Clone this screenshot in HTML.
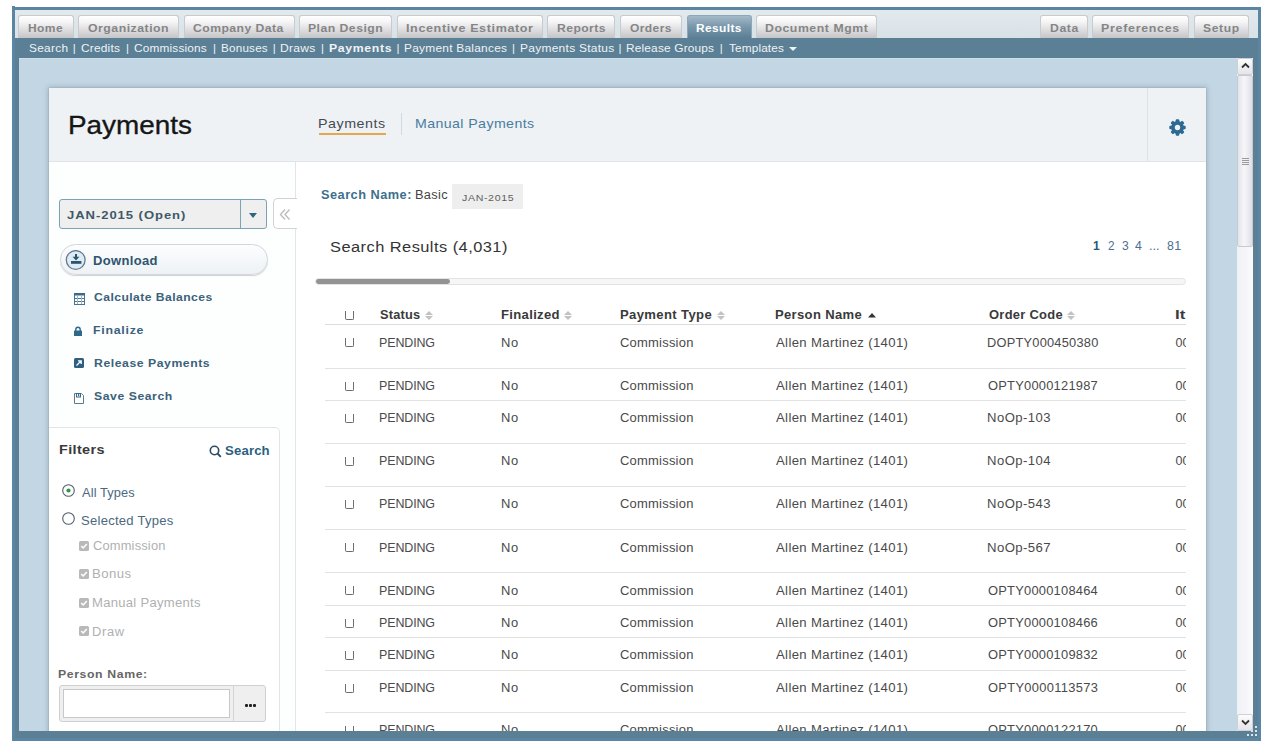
<!DOCTYPE html>
<html><head><meta charset="utf-8">
<style>
*{margin:0;padding:0;box-sizing:border-box}
html,body{width:1272px;height:748px;overflow:hidden;background:#fff;font-family:"Liberation Sans",sans-serif}
.a{position:absolute}
.t{position:absolute;white-space:nowrap;line-height:1;font-family:"Liberation Sans",sans-serif}
#frame{position:absolute;left:12px;top:7px;width:1249px;height:734px;border:3px solid #5a86a4;background:#5b7f95}
#tabbar{position:absolute;left:15px;top:10px;width:1243px;height:28px;background:linear-gradient(#e2eaee,#d8e1e6)}
.tab{position:absolute;top:15px;height:23px;border:1px solid #c8cacc;border-bottom:none;border-radius:3px 3px 0 0;background:linear-gradient(#ffffff 0%,#f6f6f7 25%,#d9d9dc 70%,#c5c5c8 100%)}
.tab.act{border-color:#8ea7b8;background:linear-gradient(#a4bac8 0%,#7b99ad 45%,#5b7f95 100%)}
#subnav{position:absolute;left:15px;top:38px;width:1243px;height:20px;background:#5b7f95}
#clip{position:absolute;left:19px;top:58px;width:1218px;height:673px;background:#c3d6e4;overflow:hidden}
#inner{position:absolute;left:-19px;top:-58px;width:1272px;height:748px}
#vscroll{position:absolute;left:1237px;top:58px;width:16px;height:673px;background:linear-gradient(90deg,#f0f0f6,#fbfbfd)}
#panel{position:absolute;left:49px;top:88px;width:1157px;height:700px;background:#fff;box-shadow:0 0 1px 0 rgba(90,100,110,.45),0 0 5px 1px rgba(90,105,118,.35)}
#phead{position:absolute;left:49px;top:88px;width:1157px;height:74px;background:#eef2f5;border-bottom:1px solid #dfe4e8}
#sidebar{position:absolute;left:49px;top:162px;width:247px;height:600px;background:#fdfefe;border-right:1px solid #e3e6e8}
#tclip{position:absolute;left:315px;top:290px;width:871px;height:460px;overflow:hidden}
#tinner{position:absolute;left:-315px;top:-290px;width:1272px;height:748px}
.rl{position:absolute;left:325px;width:1000px;height:1px;background:#e2e2e2}
.cb{position:absolute;left:345px;width:9px;height:9px;border:1px solid #6e6e6e;border-top:none;border-radius:0 0 2px 2px}
</style></head><body>
<div id="frame"></div>
<div id="tabbar"></div>
<div class="a" style="left:12px;top:6px;width:3px;height:1px;background:#5a86a4"></div>
<div id="subnav"></div>
<div class="tab" style="left:18px;width:56px"></div>
<div class="tab" style="left:78px;width:101px"></div>
<div class="tab" style="left:184px;width:111px"></div>
<div class="tab" style="left:299px;width:93px"></div>
<div class="tab" style="left:397px;width:146px"></div>
<div class="tab" style="left:547px;width:68px"></div>
<div class="tab" style="left:620px;width:62px"></div>
<div class="tab act" style="left:687px;width:65px"></div>
<div class="tab" style="left:756px;width:121px"></div>
<div class="tab" style="left:1040px;width:48px"></div>
<div class="tab" style="left:1092px;width:97px"></div>
<div class="tab" style="left:1194px;width:55px"></div>
<div style="position:absolute;left:789px;top:47px;width:0;height:0;border-left:4px solid transparent;border-right:4px solid transparent;border-top:4px solid #eef3f6"></div>
<span class="t" style="left:28.30px;top:22.57px;font-size:11.5px;color:#858585;font-weight:700;letter-spacing:0.409px;transform:scaleX(1.0443);transform-origin:0 0;">Home</span>
<span class="t" style="left:88.20px;top:22.57px;font-size:11.5px;color:#858585;font-weight:700;letter-spacing:0.461px;transform:scaleX(1.0697);transform-origin:0 0;">Organization</span>
<span class="t" style="left:193.30px;top:22.57px;font-size:11.5px;color:#858585;font-weight:700;letter-spacing:0.420px;transform:scaleX(1.0593);transform-origin:0 0;">Company Data</span>
<span class="t" style="left:307.80px;top:22.57px;font-size:11.5px;color:#858585;font-weight:700;letter-spacing:0.435px;transform:scaleX(1.0641);transform-origin:0 0;">Plan Design</span>
<span class="t" style="left:406.00px;top:22.57px;font-size:11.5px;color:#858585;font-weight:700;letter-spacing:0.570px;transform:scaleX(1.0916);transform-origin:0 0;">Incentive Estimator</span>
<span class="t" style="left:557.00px;top:22.57px;font-size:11.5px;color:#858585;font-weight:700;letter-spacing:0.405px;transform:scaleX(1.0565);transform-origin:0 0;">Reports</span>
<span class="t" style="left:630.00px;top:22.57px;font-size:11.5px;color:#858585;font-weight:700;letter-spacing:0.390px;transform:scaleX(1.0463);transform-origin:0 0;">Orders</span>
<span class="t" style="left:696.20px;top:22.57px;font-size:11.5px;color:#fff;font-weight:700;letter-spacing:0.366px;transform:scaleX(1.0385);transform-origin:0 0;">Results</span>
<span class="t" style="left:764.90px;top:22.57px;font-size:11.5px;color:#858585;font-weight:700;letter-spacing:0.543px;transform:scaleX(1.0641);transform-origin:0 0;">Document Mgmt</span>
<span class="t" style="left:1049.80px;top:22.57px;font-size:11.5px;color:#858585;font-weight:700;letter-spacing:0.564px;transform:scaleX(1.0602);transform-origin:0 0;">Data</span>
<span class="t" style="left:1101.40px;top:22.57px;font-size:11.5px;color:#858585;font-weight:700;letter-spacing:0.668px;transform:scaleX(1.0787);transform-origin:0 0;">Preferences</span>
<span class="t" style="left:1203.30px;top:22.57px;font-size:11.5px;color:#858585;font-weight:700;letter-spacing:0.604px;transform:scaleX(1.0518);transform-origin:0 0;">Setup</span>
<span class="t" style="left:29.10px;top:42.97px;font-size:11.5px;color:#eef3f6;font-weight:400;letter-spacing:0.294px;transform:scaleX(1.0301);transform-origin:0 0;">Search</span>
<span class="t" style="left:72.80px;top:42.97px;font-size:11.5px;color:#eef3f6;font-weight:400;">|</span>
<span class="t" style="left:81.40px;top:42.97px;font-size:11.5px;color:#eef3f6;font-weight:400;letter-spacing:0.165px;transform:scaleX(1.0382);transform-origin:0 0;">Credits</span>
<span class="t" style="left:126.10px;top:42.97px;font-size:11.5px;color:#eef3f6;font-weight:400;">|</span>
<span class="t" style="left:134.30px;top:42.97px;font-size:11.5px;color:#eef3f6;font-weight:400;letter-spacing:0.173px;transform:scaleX(1.0279);transform-origin:0 0;">Commissions</span>
<span class="t" style="left:212.90px;top:42.97px;font-size:11.5px;color:#eef3f6;font-weight:400;">|</span>
<span class="t" style="left:220.50px;top:42.97px;font-size:11.5px;color:#eef3f6;font-weight:400;letter-spacing:0.206px;transform:scaleX(1.0147);transform-origin:0 0;">Bonuses</span>
<span class="t" style="left:272.80px;top:42.97px;font-size:11.5px;color:#eef3f6;font-weight:400;">|</span>
<span class="t" style="left:280.20px;top:42.97px;font-size:11.5px;color:#eef3f6;font-weight:400;letter-spacing:0.247px;transform:scaleX(1.0503);transform-origin:0 0;">Draws</span>
<span class="t" style="left:321.10px;top:42.97px;font-size:11.5px;color:#eef3f6;font-weight:400;">|</span>
<span class="t" style="left:328.60px;top:42.97px;font-size:11.5px;color:#eef3f6;font-weight:700;letter-spacing:0.619px;transform:scaleX(1.0663);transform-origin:0 0;">Payments</span>
<span class="t" style="left:396.40px;top:42.97px;font-size:11.5px;color:#eef3f6;font-weight:400;">|</span>
<span class="t" style="left:404.00px;top:42.97px;font-size:11.5px;color:#eef3f6;font-weight:400;letter-spacing:0.245px;transform:scaleX(1.0347);transform-origin:0 0;">Payment Balances</span>
<span class="t" style="left:512.10px;top:42.97px;font-size:11.5px;color:#eef3f6;font-weight:400;">|</span>
<span class="t" style="left:519.50px;top:42.97px;font-size:11.5px;color:#eef3f6;font-weight:400;letter-spacing:0.262px;transform:scaleX(1.0405);transform-origin:0 0;">Payments Status</span>
<span class="t" style="left:618.40px;top:42.97px;font-size:11.5px;color:#eef3f6;font-weight:400;">|</span>
<span class="t" style="left:626.40px;top:42.97px;font-size:11.5px;color:#eef3f6;font-weight:400;letter-spacing:0.171px;transform:scaleX(1.0318);transform-origin:0 0;">Release Groups</span>
<span class="t" style="left:719.70px;top:42.97px;font-size:11.5px;color:#eef3f6;font-weight:400;">|</span>
<span class="t" style="left:729.20px;top:42.97px;font-size:11.5px;color:#eef3f6;font-weight:400;letter-spacing:0.124px;transform:scaleX(1.0266);transform-origin:0 0;">Templates</span>
<div id="clip"><div id="inner">
<div class="a" style="left:19px;top:58px;width:1218px;height:1px;background:#cddeeb"></div>
<div id="panel"></div>
<div id="phead"></div>
<div class="a" style="left:1147px;top:88px;width:1px;height:74px;background:#dde2e6"></div>
<div class="a" style="left:319px;top:133px;width:67px;height:2px;background:#e6a650"></div>
<div class="a" style="left:401px;top:113px;width:1px;height:22px;background:#d3d9de"></div>
<div id="sidebar"></div>

<!-- select -->
<div class="a" style="left:59px;top:199px;width:208px;height:30px;border:1px solid #7aa3b5;border-radius:3px;background:#efefef"></div>
<div class="a" style="left:240px;top:200px;width:1px;height:28px;background:#7aa3b5"></div>
<div class="a" style="left:249px;top:213px;width:0;height:0;border-left:4px solid transparent;border-right:4px solid transparent;border-top:5px solid #2e6680"></div>
<!-- collapse -->
<div class="a" style="left:273px;top:198px;width:24px;height:31px;border:1px solid #d2d2d2;border-right:none;border-radius:5px 0 0 5px;background:#fff"></div>
<svg class="a" style="left:279px;top:208px" width="12" height="13" viewBox="0 0 12 13"><path d="M6 1.5 L1.5 6.5 L6 11.5 M10.5 1.5 L6 6.5 L10.5 11.5" fill="none" stroke="#bdbdbd" stroke-width="1.4"/></svg>
<!-- download pill -->
<div class="a" style="left:60px;top:244px;width:208px;height:31px;border:1px solid #d2d8dd;border-radius:16px;background:linear-gradient(#fcfdfe,#eef2f5);box-shadow:0 1px 1px 0 rgba(0,0,0,.18)"></div>
<svg class="a" style="left:65px;top:250px" width="21" height="21" viewBox="0 0 21 21"><circle cx="10.7" cy="10" r="9.4" fill="#dcebf5" stroke="#66798a" stroke-width="1.3"/><rect x="10" y="4" width="2" height="3.2" fill="#2a5570"/><path d="M7.6 6.8 H14.4 L11 10.6 Z" fill="#2a5570"/><rect x="6" y="11" width="10.4" height="2.8" fill="#2a5570"/></svg>
<!-- action icons -->
<svg class="a" style="left:74px;top:293px" width="11" height="12" viewBox="0 0 11 12"><rect x="0.5" y="0.5" width="10" height="11" fill="none" stroke="#4a7592"/><rect x="0" y="0" width="11" height="2.5" fill="#3b6a8a"/><path d="M0 5.5 H11 M0 8.5 H11" stroke="#4a7592" stroke-width="1"/><path d="M3.5 3 V11 M7.5 3 V11" stroke="#9db7c9" stroke-width="1"/></svg>
<svg class="a" style="left:74px;top:326px" width="8" height="10" viewBox="0 0 8 10"><path d="M1.8 5 V3.5 A2.2 2.2 0 0 1 6.2 3.5 V5" fill="none" stroke="#2d6a8a" stroke-width="1.4"/><rect x="0" y="4.5" width="8" height="5.5" rx="0.5" fill="#2d6a8a"/></svg>
<svg class="a" style="left:74px;top:358px" width="10" height="10" viewBox="0 0 10 10"><rect x="0" y="0" width="10" height="10" rx="1.5" fill="#2d5f80"/><path d="M2.5 7.5 L7 3 M4 2.8 H7.2 V6" fill="none" stroke="#fff" stroke-width="1.3"/></svg>
<svg class="a" style="left:74px;top:393px" width="10" height="11" viewBox="0 0 10 11"><path d="M0.5 0.5 H7.5 L9.5 2.5 V10.5 H0.5 Z" fill="none" stroke="#5a7a90" stroke-width="1"/><rect x="2.5" y="0.5" width="4" height="3.5" fill="none" stroke="#3b6a8a" stroke-width="1"/><rect x="4" y="1" width="1.2" height="2.2" fill="#3b6a8a"/></svg>
<!-- filter box -->
<div class="a" style="left:49px;top:427px;width:231px;height:320px;border:1px solid #e2e5e8;border-left:none;border-radius:0 5px 0 0;background:#fff"></div>
<svg class="a" style="left:209px;top:445px" width="13" height="13" viewBox="0 0 13 13"><circle cx="5.5" cy="5.5" r="4.2" fill="none" stroke="#2a4b63" stroke-width="1.6"/><path d="M8.5 8.5 L11.8 11.8" stroke="#2a4b63" stroke-width="1.8"/></svg>
<svg class="a" style="left:62px;top:484px" width="13" height="13" viewBox="0 0 13 13"><circle cx="6.5" cy="6.5" r="5.8" fill="#fff" stroke="#4f5f6e" stroke-width="1.1"/><circle cx="6.5" cy="6.5" r="2.1" fill="#2f9a3e"/></svg>
<svg class="a" style="left:62px;top:512px" width="13" height="13" viewBox="0 0 13 13"><circle cx="6.5" cy="6.5" r="5.8" fill="#fff" stroke="#4f5f6e" stroke-width="1.1"/></svg>
<!-- checkboxes -->
<svg class="a" style="left:79px;top:541px" width="10" height="10" viewBox="0 0 10 10"><rect x="0" y="0" width="10" height="10" rx="1.5" fill="#b9b9b9"/><path d="M2.2 5 L4.2 7 L7.8 3" fill="none" stroke="#fff" stroke-width="1.5"/></svg>
<svg class="a" style="left:79px;top:569px" width="10" height="10" viewBox="0 0 10 10"><rect x="0" y="0" width="10" height="10" rx="1.5" fill="#b9b9b9"/><path d="M2.2 5 L4.2 7 L7.8 3" fill="none" stroke="#fff" stroke-width="1.5"/></svg>
<svg class="a" style="left:79px;top:598px" width="10" height="10" viewBox="0 0 10 10"><rect x="0" y="0" width="10" height="10" rx="1.5" fill="#b9b9b9"/><path d="M2.2 5 L4.2 7 L7.8 3" fill="none" stroke="#fff" stroke-width="1.5"/></svg>
<svg class="a" style="left:79px;top:626px" width="10" height="10" viewBox="0 0 10 10"><rect x="0" y="0" width="10" height="10" rx="1.5" fill="#b9b9b9"/><path d="M2.2 5 L4.2 7 L7.8 3" fill="none" stroke="#fff" stroke-width="1.5"/></svg>

<!-- person name input -->
<div class="a" style="left:59px;top:685px;width:207px;height:37px;border:1px solid #d0d0d0;border-radius:3px;background:#efefef"></div>
<div class="a" style="left:63px;top:689px;width:167px;height:29px;border:1px solid #c8c8c8;background:#fff"></div>
<div class="a" style="left:233px;top:686px;width:1px;height:35px;background:#d4d4d4"></div>
<div class="a" style="left:244.5px;top:704px;width:3px;height:3px;border-radius:1px;background:#222;box-shadow:4px 0 0 #222,8px 0 0 #222"></div>

<!-- tag -->
<div class="a" style="left:452px;top:184px;width:71px;height:25px;background:#eeeeee"></div>
<!-- gear -->
<svg class="a" style="left:1168.5px;top:118.5px" width="17" height="17" viewBox="0 0 17 17"><g fill="#2d6a92"><circle cx="8.5" cy="8.5" r="6.4"/><rect x="6.7" y="0.3" width="3.6" height="16.4" rx="1" transform="rotate(0 8.5 8.5)"/><rect x="6.7" y="0.3" width="3.6" height="16.4" rx="1" transform="rotate(45 8.5 8.5)"/><rect x="6.7" y="0.3" width="3.6" height="16.4" rx="1" transform="rotate(90 8.5 8.5)"/><rect x="6.7" y="0.3" width="3.6" height="16.4" rx="1" transform="rotate(135 8.5 8.5)"/></g><circle cx="8.5" cy="8.5" r="2.7" fill="#eef2f5"/></svg>

<span class="t" style="left:68.40px;top:111.87px;font-size:26.5px;color:#161616;font-weight:400;transform:scaleX(1.0513);transform-origin:0 0;-webkit-text-stroke:0.35px #161616;">Payments</span>
<span class="t" style="left:318.40px;top:117.17px;font-size:13.5px;color:#454b52;font-weight:400;letter-spacing:0.520px;transform:scaleX(1.0553);transform-origin:0 0;">Payments</span>
<span class="t" style="left:415.20px;top:117.17px;font-size:13.5px;color:#4a7d9e;font-weight:400;letter-spacing:0.383px;transform:scaleX(1.0501);transform-origin:0 0;">Manual Payments</span>
<span class="t" style="left:67.20px;top:210.07px;font-size:11.5px;color:#3d5868;font-weight:700;letter-spacing:0.839px;transform:scaleX(1.1335);transform-origin:0 0;">JAN-2015 (Open)</span>
<span class="t" style="left:93.20px;top:254.92px;font-size:12.5px;color:#2f5470;font-weight:700;letter-spacing:0.315px;transform:scaleX(1.0414);transform-origin:0 0;">Download</span>
<span class="t" style="left:94.00px;top:291.63px;font-size:11.3px;color:#3b627b;font-weight:700;letter-spacing:0.426px;transform:scaleX(1.0722);transform-origin:0 0;">Calculate Balances</span>
<span class="t" style="left:93.00px;top:324.93px;font-size:11.3px;color:#3b627b;font-weight:700;letter-spacing:0.677px;transform:scaleX(1.0932);transform-origin:0 0;">Finalize</span>
<span class="t" style="left:94.00px;top:358.43px;font-size:11.3px;color:#3b627b;font-weight:700;letter-spacing:0.513px;transform:scaleX(1.0815);transform-origin:0 0;">Release Payments</span>
<span class="t" style="left:94.00px;top:391.43px;font-size:11.3px;color:#3b627b;font-weight:700;letter-spacing:0.529px;transform:scaleX(1.0790);transform-origin:0 0;">Save Search</span>
<span class="t" style="left:58.70px;top:443.17px;font-size:13.5px;color:#3a3a3a;font-weight:700;letter-spacing:0.326px;transform:scaleX(1.0694);transform-origin:0 0;">Filters</span>
<span class="t" style="left:225.30px;top:443.60px;font-size:13px;color:#2d5f80;font-weight:700;letter-spacing:0.149px;transform:scaleX(1.0127);transform-origin:0 0;">Search</span>
<span class="t" style="left:81.60px;top:486.92px;font-size:12.5px;color:#4a6880;font-weight:400;letter-spacing:0.124px;transform:scaleX(1.0237);transform-origin:0 0;">All Types</span>
<span class="t" style="left:80.60px;top:514.92px;font-size:12.5px;color:#4a6880;font-weight:400;letter-spacing:0.245px;transform:scaleX(1.0448);transform-origin:0 0;">Selected Types</span>
<span class="t" style="left:93.00px;top:540.22px;font-size:12.5px;color:#b0b0b0;font-weight:400;letter-spacing:0.165px;transform:scaleX(1.0304);transform-origin:0 0;">Commission</span>
<span class="t" style="left:92.00px;top:568.42px;font-size:12.5px;color:#b0b0b0;font-weight:400;letter-spacing:0.427px;transform:scaleX(1.0502);transform-origin:0 0;">Bonus</span>
<span class="t" style="left:92.00px;top:597.02px;font-size:12.5px;color:#b0b0b0;font-weight:400;letter-spacing:0.280px;transform:scaleX(1.0435);transform-origin:0 0;">Manual Payments</span>
<span class="t" style="left:92.00px;top:625.62px;font-size:12.5px;color:#b0b0b0;font-weight:400;letter-spacing:0.650px;transform:scaleX(1.0339);transform-origin:0 0;">Draw</span>
<span class="t" style="left:58.40px;top:669.27px;font-size:11.5px;color:#666;font-weight:700;letter-spacing:0.569px;transform:scaleX(1.0666);transform-origin:0 0;">Person Name:</span>
<span class="t" style="left:320.80px;top:188.84px;font-size:12px;color:#3d6f8e;font-weight:700;letter-spacing:0.462px;transform:scaleX(1.0620);transform-origin:0 0;">Search Name:</span>
<span class="t" style="left:415.20px;top:188.84px;font-size:12px;color:#444;font-weight:400;letter-spacing:0.307px;transform:scaleX(1.0640);transform-origin:0 0;">Basic</span>
<span class="t" style="left:461.70px;top:193.17px;font-size:9.6px;color:#606060;font-weight:400;letter-spacing:0.579px;transform:scaleX(1.1052);transform-origin:0 0;">JAN-2015</span>
<span class="t" style="left:329.70px;top:239.38px;font-size:15.5px;color:#333;font-weight:400;letter-spacing:0.439px;transform:scaleX(1.0576);transform-origin:0 0;">Search Results (4,031)</span>
<span class="t" style="left:1093.00px;top:240.12px;font-size:12.5px;color:#2a5a78;font-weight:700;letter-spacing:-1.027px;transform:scaleX(0.9710);transform-origin:0 0;">1</span>
<span class="t" style="left:1107.80px;top:240.12px;font-size:12.5px;color:#4a7090;font-weight:400;letter-spacing:0.013px;transform:scaleX(0.9411);transform-origin:0 0;">2</span>
<span class="t" style="left:1121.50px;top:240.12px;font-size:12.5px;color:#4a7090;font-weight:400;letter-spacing:-1.292px;transform:scaleX(0.9636);transform-origin:0 0;">3</span>
<span class="t" style="left:1135.20px;top:240.12px;font-size:12.5px;color:#4a7090;font-weight:400;letter-spacing:-0.507px;transform:scaleX(0.9856);transform-origin:0 0;">4</span>
<span class="t" style="left:1148.80px;top:240.12px;font-size:12.5px;color:#4a7090;font-weight:400;letter-spacing:0.001px;transform:scaleX(1.0220);transform-origin:0 0;">...</span>
<span class="t" style="left:1166.80px;top:240.12px;font-size:12.5px;color:#4a7090;font-weight:400;letter-spacing:0.254px;transform:scaleX(0.9892);transform-origin:0 0;">81</span>
<div class="a" style="left:315px;top:278px;width:871px;height:7px;border:1px solid #e3e3e3;border-radius:3.5px;background:#f6f6f6"></div>
<div class="a" style="left:315.5px;top:279.3px;width:134px;height:4.7px;border-radius:2.4px;background:#939393"></div>
<div id="tclip"><div id="tinner">
<div class="rl" style="top:324px;background:#dcdcdc"></div>
<div class="rl" style="top:368px"></div>
<div class="rl" style="top:400px"></div>
<div class="rl" style="top:443px"></div>
<div class="rl" style="top:486px"></div>
<div class="rl" style="top:529px"></div>
<div class="rl" style="top:572px"></div>
<div class="rl" style="top:605px"></div>
<div class="rl" style="top:637px"></div>
<div class="rl" style="top:670px"></div>
<div class="rl" style="top:712px"></div>
<div class="cb" style="top:311px"></div>
<div class="cb" style="top:338px"></div>
<div class="cb" style="top:382px"></div>
<div class="cb" style="top:414px"></div>
<div class="cb" style="top:457px"></div>
<div class="cb" style="top:500px"></div>
<div class="cb" style="top:543px"></div>
<div class="cb" style="top:586px"></div>
<div class="cb" style="top:619px"></div>
<div class="cb" style="top:651px"></div>
<div class="cb" style="top:684px"></div>
<div class="cb" style="top:726px"></div>
<svg class="a" style="left:867.5px;top:313px" width="8" height="5" viewBox="0 0 8 5"><path d="M4 0 L8 4.5 H0 Z" fill="#333"/></svg>
<svg class="a" style="left:425px;top:311px" width="8" height="9" viewBox="0 0 8 9"><path d="M4 0 L8 3.9 H0 Z M0 5.1 H8 L4 9 Z" fill="#c2c2c2"/></svg>
<svg class="a" style="left:564px;top:311px" width="8" height="9" viewBox="0 0 8 9"><path d="M4 0 L8 3.9 H0 Z M0 5.1 H8 L4 9 Z" fill="#c2c2c2"/></svg>
<svg class="a" style="left:717px;top:311px" width="8" height="9" viewBox="0 0 8 9"><path d="M4 0 L8 3.9 H0 Z M0 5.1 H8 L4 9 Z" fill="#c2c2c2"/></svg>
<svg class="a" style="left:1067px;top:311px" width="8" height="9" viewBox="0 0 8 9"><path d="M4 0 L8 3.9 H0 Z M0 5.1 H8 L4 9 Z" fill="#c2c2c2"/></svg>

<span class="t" style="left:379.60px;top:309.12px;font-size:12.5px;color:#3a3a3a;font-weight:700;letter-spacing:0.198px;transform:scaleX(1.0208);transform-origin:0 0;">Status</span>
<span class="t" style="left:501.00px;top:309.12px;font-size:12.5px;color:#3a3a3a;font-weight:700;letter-spacing:0.305px;transform:scaleX(1.0470);transform-origin:0 0;">Finalized</span>
<span class="t" style="left:619.90px;top:309.12px;font-size:12.5px;color:#3a3a3a;font-weight:700;letter-spacing:0.355px;transform:scaleX(1.0448);transform-origin:0 0;">Payment Type</span>
<span class="t" style="left:775.40px;top:309.12px;font-size:12.5px;color:#3a3a3a;font-weight:700;letter-spacing:0.319px;transform:scaleX(1.0428);transform-origin:0 0;">Person Name</span>
<span class="t" style="left:988.60px;top:309.12px;font-size:12.5px;color:#3a3a3a;font-weight:700;letter-spacing:0.273px;transform:scaleX(1.0328);transform-origin:0 0;">Order Code</span>
<span class="t" style="left:1174.50px;top:309.12px;font-size:12.5px;color:#3a3a3a;font-weight:700;transform:scaleX(1.3446);transform-origin:0 0;">It</span>
<span class="t" style="left:378.60px;top:336.72px;font-size:12.5px;color:#4a4a4a;font-weight:400;letter-spacing:-0.125px;transform:scaleX(0.9973);transform-origin:0 0;">PENDING</span>
<span class="t" style="left:500.80px;top:336.72px;font-size:12.5px;color:#4a4a4a;font-weight:400;letter-spacing:0.733px;transform:scaleX(1.0360);transform-origin:0 0;">No</span>
<span class="t" style="left:620.40px;top:336.72px;font-size:12.5px;color:#4a4a4a;font-weight:400;letter-spacing:0.219px;transform:scaleX(1.0375);transform-origin:0 0;">Commission</span>
<span class="t" style="left:775.80px;top:336.72px;font-size:12.5px;color:#4a4a4a;font-weight:400;letter-spacing:0.340px;transform:scaleX(1.0508);transform-origin:0 0;">Allen Martinez (1401)</span>
<span class="t" style="left:987.30px;top:336.72px;font-size:12.5px;color:#4a4a4a;font-weight:400;letter-spacing:0.228px;transform:scaleX(1.0245);transform-origin:0 0;">DOPTY000450380</span>
<span class="t" style="left:1175.50px;top:336.72px;font-size:12.5px;color:#4a4a4a;font-weight:400;">0000</span>
<span class="t" style="left:378.60px;top:379.72px;font-size:12.5px;color:#4a4a4a;font-weight:400;letter-spacing:-0.125px;transform:scaleX(0.9973);transform-origin:0 0;">PENDING</span>
<span class="t" style="left:500.80px;top:379.72px;font-size:12.5px;color:#4a4a4a;font-weight:400;letter-spacing:0.733px;transform:scaleX(1.0360);transform-origin:0 0;">No</span>
<span class="t" style="left:620.40px;top:379.72px;font-size:12.5px;color:#4a4a4a;font-weight:400;letter-spacing:0.219px;transform:scaleX(1.0375);transform-origin:0 0;">Commission</span>
<span class="t" style="left:775.80px;top:379.72px;font-size:12.5px;color:#4a4a4a;font-weight:400;letter-spacing:0.340px;transform:scaleX(1.0508);transform-origin:0 0;">Allen Martinez (1401)</span>
<span class="t" style="left:988.30px;top:379.72px;font-size:12.5px;color:#4a4a4a;font-weight:400;letter-spacing:0.228px;transform:scaleX(1.0306);transform-origin:0 0;">OPTY0000121987</span>
<span class="t" style="left:1175.50px;top:379.72px;font-size:12.5px;color:#4a4a4a;font-weight:400;">0000</span>
<span class="t" style="left:378.60px;top:412.22px;font-size:12.5px;color:#4a4a4a;font-weight:400;letter-spacing:-0.125px;transform:scaleX(0.9973);transform-origin:0 0;">PENDING</span>
<span class="t" style="left:500.80px;top:412.22px;font-size:12.5px;color:#4a4a4a;font-weight:400;letter-spacing:0.733px;transform:scaleX(1.0360);transform-origin:0 0;">No</span>
<span class="t" style="left:620.40px;top:412.22px;font-size:12.5px;color:#4a4a4a;font-weight:400;letter-spacing:0.219px;transform:scaleX(1.0375);transform-origin:0 0;">Commission</span>
<span class="t" style="left:775.80px;top:412.22px;font-size:12.5px;color:#4a4a4a;font-weight:400;letter-spacing:0.340px;transform:scaleX(1.0508);transform-origin:0 0;">Allen Martinez (1401)</span>
<span class="t" style="left:987.30px;top:412.22px;font-size:12.5px;color:#4a4a4a;font-weight:400;letter-spacing:0.452px;transform:scaleX(1.0455);transform-origin:0 0;">NoOp-103</span>
<span class="t" style="left:1175.50px;top:412.22px;font-size:12.5px;color:#4a4a4a;font-weight:400;">0000</span>
<span class="t" style="left:378.60px;top:455.22px;font-size:12.5px;color:#4a4a4a;font-weight:400;letter-spacing:-0.125px;transform:scaleX(0.9973);transform-origin:0 0;">PENDING</span>
<span class="t" style="left:500.80px;top:455.22px;font-size:12.5px;color:#4a4a4a;font-weight:400;letter-spacing:0.733px;transform:scaleX(1.0360);transform-origin:0 0;">No</span>
<span class="t" style="left:620.40px;top:455.22px;font-size:12.5px;color:#4a4a4a;font-weight:400;letter-spacing:0.219px;transform:scaleX(1.0375);transform-origin:0 0;">Commission</span>
<span class="t" style="left:775.80px;top:455.22px;font-size:12.5px;color:#4a4a4a;font-weight:400;letter-spacing:0.340px;transform:scaleX(1.0508);transform-origin:0 0;">Allen Martinez (1401)</span>
<span class="t" style="left:987.30px;top:455.22px;font-size:12.5px;color:#4a4a4a;font-weight:400;letter-spacing:0.452px;transform:scaleX(1.0455);transform-origin:0 0;">NoOp-104</span>
<span class="t" style="left:1175.50px;top:455.22px;font-size:12.5px;color:#4a4a4a;font-weight:400;">0000</span>
<span class="t" style="left:378.60px;top:498.22px;font-size:12.5px;color:#4a4a4a;font-weight:400;letter-spacing:-0.125px;transform:scaleX(0.9973);transform-origin:0 0;">PENDING</span>
<span class="t" style="left:500.80px;top:498.22px;font-size:12.5px;color:#4a4a4a;font-weight:400;letter-spacing:0.733px;transform:scaleX(1.0360);transform-origin:0 0;">No</span>
<span class="t" style="left:620.40px;top:498.22px;font-size:12.5px;color:#4a4a4a;font-weight:400;letter-spacing:0.219px;transform:scaleX(1.0375);transform-origin:0 0;">Commission</span>
<span class="t" style="left:775.80px;top:498.22px;font-size:12.5px;color:#4a4a4a;font-weight:400;letter-spacing:0.340px;transform:scaleX(1.0508);transform-origin:0 0;">Allen Martinez (1401)</span>
<span class="t" style="left:987.30px;top:498.22px;font-size:12.5px;color:#4a4a4a;font-weight:400;letter-spacing:0.452px;transform:scaleX(1.0455);transform-origin:0 0;">NoOp-543</span>
<span class="t" style="left:1175.50px;top:498.22px;font-size:12.5px;color:#4a4a4a;font-weight:400;">0000</span>
<span class="t" style="left:378.60px;top:542.02px;font-size:12.5px;color:#4a4a4a;font-weight:400;letter-spacing:-0.125px;transform:scaleX(0.9973);transform-origin:0 0;">PENDING</span>
<span class="t" style="left:500.80px;top:542.02px;font-size:12.5px;color:#4a4a4a;font-weight:400;letter-spacing:0.733px;transform:scaleX(1.0360);transform-origin:0 0;">No</span>
<span class="t" style="left:620.40px;top:542.02px;font-size:12.5px;color:#4a4a4a;font-weight:400;letter-spacing:0.219px;transform:scaleX(1.0375);transform-origin:0 0;">Commission</span>
<span class="t" style="left:775.80px;top:542.02px;font-size:12.5px;color:#4a4a4a;font-weight:400;letter-spacing:0.340px;transform:scaleX(1.0508);transform-origin:0 0;">Allen Martinez (1401)</span>
<span class="t" style="left:987.30px;top:542.02px;font-size:12.5px;color:#4a4a4a;font-weight:400;letter-spacing:0.384px;transform:scaleX(1.0548);transform-origin:0 0;">NoOp-567</span>
<span class="t" style="left:1175.50px;top:542.02px;font-size:12.5px;color:#4a4a4a;font-weight:400;">0000</span>
<span class="t" style="left:378.60px;top:585.02px;font-size:12.5px;color:#4a4a4a;font-weight:400;letter-spacing:-0.125px;transform:scaleX(0.9973);transform-origin:0 0;">PENDING</span>
<span class="t" style="left:500.80px;top:585.02px;font-size:12.5px;color:#4a4a4a;font-weight:400;letter-spacing:0.733px;transform:scaleX(1.0360);transform-origin:0 0;">No</span>
<span class="t" style="left:620.40px;top:585.02px;font-size:12.5px;color:#4a4a4a;font-weight:400;letter-spacing:0.219px;transform:scaleX(1.0375);transform-origin:0 0;">Commission</span>
<span class="t" style="left:775.80px;top:585.02px;font-size:12.5px;color:#4a4a4a;font-weight:400;letter-spacing:0.340px;transform:scaleX(1.0508);transform-origin:0 0;">Allen Martinez (1401)</span>
<span class="t" style="left:988.30px;top:585.02px;font-size:12.5px;color:#4a4a4a;font-weight:400;letter-spacing:0.228px;transform:scaleX(1.0306);transform-origin:0 0;">OPTY0000108464</span>
<span class="t" style="left:1175.50px;top:585.02px;font-size:12.5px;color:#4a4a4a;font-weight:400;">0000</span>
<span class="t" style="left:378.60px;top:616.72px;font-size:12.5px;color:#4a4a4a;font-weight:400;letter-spacing:-0.125px;transform:scaleX(0.9973);transform-origin:0 0;">PENDING</span>
<span class="t" style="left:500.80px;top:616.72px;font-size:12.5px;color:#4a4a4a;font-weight:400;letter-spacing:0.733px;transform:scaleX(1.0360);transform-origin:0 0;">No</span>
<span class="t" style="left:620.40px;top:616.72px;font-size:12.5px;color:#4a4a4a;font-weight:400;letter-spacing:0.219px;transform:scaleX(1.0375);transform-origin:0 0;">Commission</span>
<span class="t" style="left:775.80px;top:616.72px;font-size:12.5px;color:#4a4a4a;font-weight:400;letter-spacing:0.340px;transform:scaleX(1.0508);transform-origin:0 0;">Allen Martinez (1401)</span>
<span class="t" style="left:988.30px;top:616.72px;font-size:12.5px;color:#4a4a4a;font-weight:400;letter-spacing:0.228px;transform:scaleX(1.0306);transform-origin:0 0;">OPTY0000108466</span>
<span class="t" style="left:1175.50px;top:616.72px;font-size:12.5px;color:#4a4a4a;font-weight:400;">0000</span>
<span class="t" style="left:378.60px;top:648.72px;font-size:12.5px;color:#4a4a4a;font-weight:400;letter-spacing:-0.125px;transform:scaleX(0.9973);transform-origin:0 0;">PENDING</span>
<span class="t" style="left:500.80px;top:648.72px;font-size:12.5px;color:#4a4a4a;font-weight:400;letter-spacing:0.733px;transform:scaleX(1.0360);transform-origin:0 0;">No</span>
<span class="t" style="left:620.40px;top:648.72px;font-size:12.5px;color:#4a4a4a;font-weight:400;letter-spacing:0.219px;transform:scaleX(1.0375);transform-origin:0 0;">Commission</span>
<span class="t" style="left:775.80px;top:648.72px;font-size:12.5px;color:#4a4a4a;font-weight:400;letter-spacing:0.340px;transform:scaleX(1.0508);transform-origin:0 0;">Allen Martinez (1401)</span>
<span class="t" style="left:988.30px;top:648.72px;font-size:12.5px;color:#4a4a4a;font-weight:400;letter-spacing:0.228px;transform:scaleX(1.0306);transform-origin:0 0;">OPTY0000109832</span>
<span class="t" style="left:1175.50px;top:648.72px;font-size:12.5px;color:#4a4a4a;font-weight:400;">0000</span>
<span class="t" style="left:378.60px;top:681.72px;font-size:12.5px;color:#4a4a4a;font-weight:400;letter-spacing:-0.125px;transform:scaleX(0.9973);transform-origin:0 0;">PENDING</span>
<span class="t" style="left:500.80px;top:681.72px;font-size:12.5px;color:#4a4a4a;font-weight:400;letter-spacing:0.733px;transform:scaleX(1.0360);transform-origin:0 0;">No</span>
<span class="t" style="left:620.40px;top:681.72px;font-size:12.5px;color:#4a4a4a;font-weight:400;letter-spacing:0.219px;transform:scaleX(1.0375);transform-origin:0 0;">Commission</span>
<span class="t" style="left:775.80px;top:681.72px;font-size:12.5px;color:#4a4a4a;font-weight:400;letter-spacing:0.340px;transform:scaleX(1.0508);transform-origin:0 0;">Allen Martinez (1401)</span>
<span class="t" style="left:988.30px;top:681.72px;font-size:12.5px;color:#4a4a4a;font-weight:400;letter-spacing:0.302px;transform:scaleX(1.0306);transform-origin:0 0;">OPTY0000113573</span>
<span class="t" style="left:1175.50px;top:681.72px;font-size:12.5px;color:#4a4a4a;font-weight:400;">0000</span>
<span class="t" style="left:378.60px;top:724.22px;font-size:12.5px;color:#4a4a4a;font-weight:400;letter-spacing:-0.125px;transform:scaleX(0.9973);transform-origin:0 0;">PENDING</span>
<span class="t" style="left:500.80px;top:724.22px;font-size:12.5px;color:#4a4a4a;font-weight:400;letter-spacing:0.733px;transform:scaleX(1.0360);transform-origin:0 0;">No</span>
<span class="t" style="left:620.40px;top:724.22px;font-size:12.5px;color:#4a4a4a;font-weight:400;letter-spacing:0.219px;transform:scaleX(1.0375);transform-origin:0 0;">Commission</span>
<span class="t" style="left:775.80px;top:724.22px;font-size:12.5px;color:#4a4a4a;font-weight:400;letter-spacing:0.340px;transform:scaleX(1.0508);transform-origin:0 0;">Allen Martinez (1401)</span>
<span class="t" style="left:988.30px;top:724.22px;font-size:12.5px;color:#4a4a4a;font-weight:400;letter-spacing:0.228px;transform:scaleX(1.0306);transform-origin:0 0;">OPTY0000122170</span>
<span class="t" style="left:1175.50px;top:724.22px;font-size:12.5px;color:#4a4a4a;font-weight:400;">0000</span>
</div></div>
</div></div>
<div id="vscroll"></div>
<div class="a" style="left:1255px;top:726px;width:2px;height:2px;background:#dbe6ee"></div><div class="a" style="left:1255px;top:730px;width:2px;height:2px;background:#dbe6ee"></div><div class="a" style="left:1251px;top:730px;width:2px;height:2px;background:#dbe6ee"></div><div class="a" style="left:1247px;top:734px;width:2px;height:2px;background:#dbe6ee"></div><div class="a" style="left:1251px;top:734px;width:2px;height:2px;background:#dbe6ee"></div><div class="a" style="left:1255px;top:734px;width:2px;height:2px;background:#dbe6ee"></div>
<div class="a" style="left:1237px;top:58px;width:16px;height:17px;border:1px solid #cfcfd6;border-radius:2px;background:linear-gradient(#fdfdfd,#e4e4ea)"></div>
<svg class="a" style="left:1240.5px;top:62px" width="9" height="7" viewBox="0 0 9 7"><path d="M1 5.5 L4.5 2 L8 5.5" fill="none" stroke="#333" stroke-width="1.8"/></svg>
<div class="a" style="left:1237px;top:75px;width:16px;height:172px;border:1px solid #c9c9d2;border-radius:2px;background:linear-gradient(90deg,#e3e3ea,#f7f7fa 45%,#dedee6)"></div>
<div class="a" style="left:1241.5px;top:158px;width:7px;height:1px;background:#9a9a9a;box-shadow:0 2px 0 #9a9a9a,0 4px 0 #9a9a9a,0 6px 0 #9a9a9a"></div>
<div class="a" style="left:1237px;top:714px;width:16px;height:17px;border:1px solid #cfcfd6;border-radius:2px;background:linear-gradient(#fdfdfd,#e4e4ea)"></div>
<svg class="a" style="left:1240.5px;top:719px" width="9" height="7" viewBox="0 0 9 7"><path d="M1 1.5 L4.5 5 L8 1.5" fill="none" stroke="#333" stroke-width="1.8"/></svg>

</body></html>
